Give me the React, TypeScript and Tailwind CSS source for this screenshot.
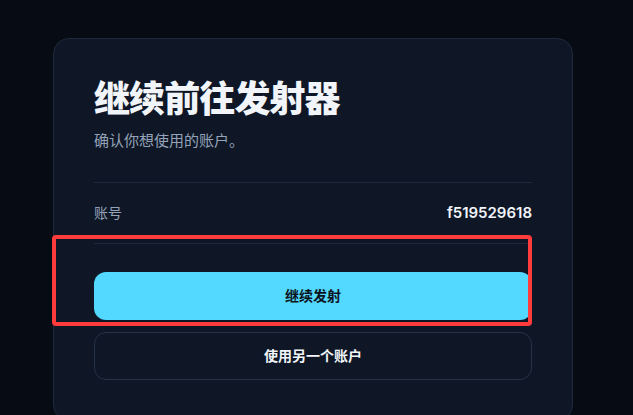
export default function App() {
	return (
		<div
			className="relative h-[415px] w-full overflow-hidden bg-[#070b13] pt-[38px]"
			style={{ fontFamily: '"Inter", "Noto Sans CJK SC", sans-serif' }}
		>
			<div className="ml-[53px] w-[520px] rounded-2xl border border-[#1e2a3b] bg-[#0f1727] p-10">
				<h1 className="text-4xl leading-10 font-extrabold tracking-tight text-[#f1f5f9]">
					继续前往发射器
				</h1>
				<p className="mt-[11px] text-[15px] leading-[22px] text-[#94a3b8]">
					确认你想使用的账户。
				</p>

				<div className="mt-[30px] flex items-center justify-between border-y border-[#1e293b] py-5 text-sm leading-5">
					<span className="text-[#94a3b8]">账号</span>
					<span className="text-[15px] font-semibold text-[#f1f5f9]">f519529618</span>
				</div>

				<div className="mt-7 flex flex-col gap-3">
					<button className="h-12 w-full rounded-xl bg-[#53d8ff] text-sm font-bold text-[#0b1220]">
						继续发射
					</button>
					<button className="h-12 w-full rounded-xl border border-[#243247] text-sm font-bold text-[#f1f5f9]">
						使用另一个账户
					</button>
				</div>
			</div>

			{/* annotation box drawn over the primary action */}
			<div className="pointer-events-none absolute top-[235px] left-[52px] h-[91px] w-[480px] rounded-[4px] border-4 border-[#ff3b3b]" />
		</div>
	);
}
